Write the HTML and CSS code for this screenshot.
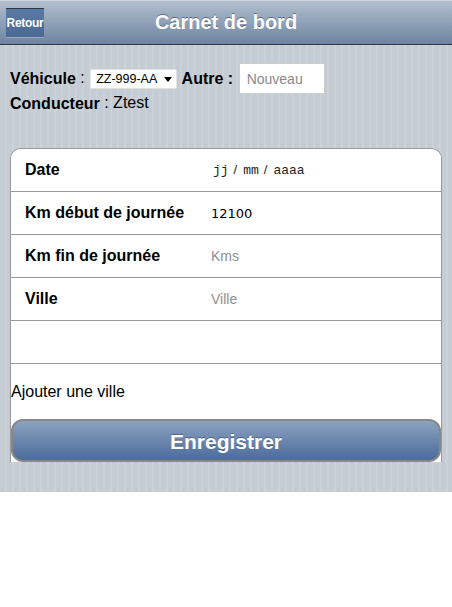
FILE: index.html
```html
<!DOCTYPE html>
<html lang="fr">
<head>
    <meta charset="UTF-8">
    <meta name="viewport" content="width=device-width, initial-scale=1.0">
    <title>Carnet de bord</title>
    <link rel="stylesheet" href="styles.css">
</head>
<body>
    <div class="toolbar">
        <a href="javascript:;" class="back">Retour</a>
        <h1>Carnet de bord</h1>
    </div>
    <div class="panel">
        <div class="infos">
            <div class="line"><b>Véhicule</b> : <span class="select"><select class="vehicule">
                    <option>ZZ-999-AA</option>
                </select></span> <b>Autre :</b> <input type="text" class="autre" placeholder="Nouveau"></div>
            <div class="line"><b>Conducteur</b> : Ztest</div>
        </div>
        <fieldset>
            <div class="row">
                <label>Date</label>
                <span class="date">jj<i>/</i>mm<i>/</i>aaaa</span>
            </div>
            <div class="row">
                <label>Km début de journée</label>
                <input type="text" value="12100" class="num">
            </div>
            <div class="row">
                <label>Km fin de journée</label>
                <input type="text" placeholder="Kms">
            </div>
            <div class="row">
                <label>Ville</label>
                <input type="text" placeholder="Ville">
            </div>
            <div class="row"></div>
            <div class="add">Ajouter une ville</div>
            <a href="javascript:;" class="save">Enregistrer</a>
        </fieldset>
    </div>
</body>
</html>
```

FILE: styles.css
```css
*{
    padding: 0;
    margin: 0;
    box-sizing: border-box;
}
body{
    font-family: "Liberation Sans", Arial, sans-serif;
    background-color: #fff;
}
.toolbar{
    position: relative;
    height: 45px;
    border-top: 1px solid #cdd5df;
    border-bottom: 1px solid #2d3642;
    background: linear-gradient(#b2bfce, #6d84a2);
}
.toolbar > h1{
    line-height: 43px;
    text-align: center;
    font-size: 20px;
    font-weight: bold;
    color: #fff;
    text-shadow: rgba(0, 0, 0, 0.4) 0 -1px 0;
}
.toolbar > .back{
    position: absolute;
    left: 6px;
    top: 7px;
    width: 38px;
    height: 30px;
    line-height: 28px;
    border-top: 1px solid #2d3642;
    border-bottom: 1px solid #9aa8bb;
    background: linear-gradient(#5a7aa6, #4a6894);
    color: #fff;
    font-size: 12px;
    font-weight: bold;
    text-align: center;
    text-decoration: none;
    letter-spacing: -0.3px;
    white-space: nowrap;
    overflow: hidden;
}
.panel{
    padding: 18px 10px 30px 10px;
    background: repeating-linear-gradient(90deg, #c5ccd4 0, #c5ccd4 5px, #cbd2d8 5px, #cbd2d8 7px);
}
.infos{
    padding-bottom: 35px;
    font-size: 16px;
    color: #000;
}
.infos .line{
    height: 30px;
    line-height: 30px;
    white-space: nowrap;
}
.infos .line:last-child{
    height: 20px;
    line-height: 20px;
}
.infos .line > *{
    vertical-align: middle;
}
.select{
    position: relative;
    display: inline-block;
    height: 20px;
    margin-left: 1px;
    line-height: 0;
}
/* petite fleche noire du select */
.select::after{
    content: "";
    position: absolute;
    right: 5px;
    top: 8px;
    border-left: 4px solid transparent;
    border-right: 4px solid transparent;
    border-top: 5px solid #000;
    pointer-events: none;
}
.vehicule{
    appearance: none;
    -webkit-appearance: none;
    width: 87px;
    height: 20px;
    padding-left: 5px;
    border: 1px solid #e2e2e2;
    border-radius: 2px;
    background-color: #fff;
    color: #000;
    font-family: "Liberation Sans", Arial, sans-serif;
    font-size: 12.5px;
}
.autre{
    width: 86px;
    height: 31px;
    margin-left: 1px;
    padding-left: 7px;
    border: 1px solid #ccc;
    background-color: #fff;
    font-family: "Liberation Sans", Arial, sans-serif;
    font-size: 14px;
}
.autre::placeholder{
    color: #888;
}
fieldset{
    border: 1px solid #999;
    border-bottom: none;
    border-radius: 10px 10px 0 0;
    background-color: #fff;
}
fieldset > .row{
    display: flex;
    align-items: center;
    height: 43px;
    border-bottom: 1px solid #999;
    padding-left: 14px;
}
fieldset > .row > label{
    width: 186px;
    font-size: 16px;
    font-weight: bold;
    color: #000;
}
fieldset > .row > input{
    width: 200px;
    border: none;
    outline: none;
    font-family: "Liberation Sans", Arial, sans-serif;
    font-size: 14px;
    color: #000;
}
fieldset > .row > input.num{
    font-family: "DejaVu Sans", sans-serif;
    font-size: 13px;
}
fieldset > .row > input::placeholder{
    color: #8e8e93;
}
fieldset > .row > .date{
    padding-left: 2px;
    font-family: "Liberation Mono", monospace;
    font-size: 13px;
    color: #222;
}
fieldset > .row > .date > i{
    margin: 0 6px 0 5px;
    font-family: "Liberation Sans", Arial, sans-serif;
    font-style: normal;
    font-size: 13px;
}
fieldset > .add{
    height: 55px;
    line-height: 56px;
    font-size: 16px;
    color: #000;
}
fieldset > .save{
    display: block;
    height: 43px;
    line-height: 42px;
    border: 2px solid #888;
    border-radius: 12px;
    background: linear-gradient(#8ca3c1, #4b6b9b);
    color: #fff;
    font-size: 21px;
    font-weight: bold;
    text-align: center;
    text-decoration: none;
    text-shadow: rgba(0, 0, 0, 0.3) 0 -1px 0;
}
```
